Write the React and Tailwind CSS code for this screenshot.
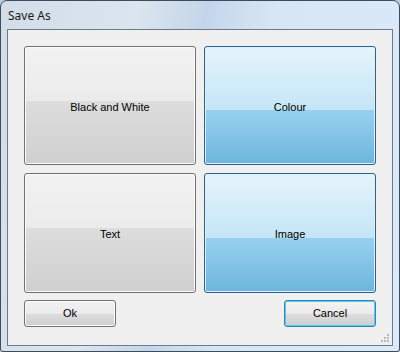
import React from "react";

function GrayBtn({ children }) {
  return (
    <button className="relative flex flex-1 items-center justify-center overflow-hidden rounded-[3px] border border-[#707070] bg-[linear-gradient(to_bottom,#f2f2f2_0%,#ebebeb_46%,#dddddd_46%,#cfcfcf_100%)] pt-[3px] shadow-[inset_0_0_0_1px_#fcfcfc] text-[11px] text-black [font-family:'Liberation_Sans',Arial,sans-serif]">
      {children}
    </button>
  );
}

function BlueBtn({ children }) {
  return (
    <button className="relative flex flex-1 items-center justify-center overflow-hidden rounded-[3px] border border-[#2c628b] bg-[linear-gradient(to_bottom,#e5f4fc_0%,#c4e5f6_54%,#98d1ef_54%,#6cb5dd_100%)] pt-[3px] shadow-[inset_0_0_0_1px_#e0f1fb] text-[11px] text-black [font-family:'Liberation_Sans',Arial,sans-serif]">
      {children}
    </button>
  );
}

export default function App() {
  return (
    <div className="h-[352px] w-[400px] overflow-hidden bg-[#b9cde0]">
      <div className="flex h-[352px] w-[400px] flex-col rounded-t-[7px] rounded-b-[3px] border border-[#3e4c5a] bg-[linear-gradient(100deg,#d3dde8_0%,#dbe5ef_30%,#c3d6e9_45%,#d7e6f6_60%,#dbeafb_100%)]">
        <div className="flex h-[28px] items-center pl-[7px] pt-[1px] text-[12px] text-[#1a1a1a] [font-family:'Noto_Sans',sans-serif]">
          Save As
        </div>
        <div className="mx-[6px] mb-[5px] flex flex-1 flex-col border border-[#6b7b8b] bg-[#f0f0f0] relative">
          <div className="flex flex-col gap-[8px] px-[16px] pt-[16px]">
            <div className="flex h-[119px] gap-[8px]">
              <GrayBtn>Black and White</GrayBtn>
              <BlueBtn>Colour</BlueBtn>
            </div>
            <div className="flex h-[120px] gap-[8px]">
              <GrayBtn>Text</GrayBtn>
              <BlueBtn>Image</BlueBtn>
            </div>
          </div>
          <div className="flex justify-between px-[16px] pt-[7px]">
            <button className="flex h-[27px] w-[92px] items-center justify-center rounded-[3px] border border-[#707070] bg-[linear-gradient(to_bottom,#f2f2f2_0%,#ebebeb_50%,#dddddd_50%,#cfcfcf_100%)] shadow-[inset_0_0_0_1px_#fcfcfc] text-[11px] text-black [font-family:'Liberation_Sans',Arial,sans-serif]">
              Ok
            </button>
            <button className="flex h-[27px] w-[92px] items-center justify-center rounded-[3px] border border-[#3c7fb1] bg-[linear-gradient(to_bottom,#f2f2f2_0%,#ebebeb_50%,#dddddd_50%,#cfcfcf_100%)] shadow-[inset_0_0_0_1px_#48d0f6] text-[11px] text-black [font-family:'Liberation_Sans',Arial,sans-serif]">
              Cancel
            </button>
          </div>
          <svg className="absolute bottom-[2px] right-[2px]" width="10" height="10" viewBox="0 0 10 10">
            <g fill="#b8b8b8">
              <rect x="7" y="1" width="2" height="2" />
              <rect x="4" y="4" width="2" height="2" />
              <rect x="7" y="4" width="2" height="2" />
              <rect x="1" y="7" width="2" height="2" />
              <rect x="4" y="7" width="2" height="2" />
              <rect x="7" y="7" width="2" height="2" />
            </g>
          </svg>
        </div>
      </div>
    </div>
  );
}
